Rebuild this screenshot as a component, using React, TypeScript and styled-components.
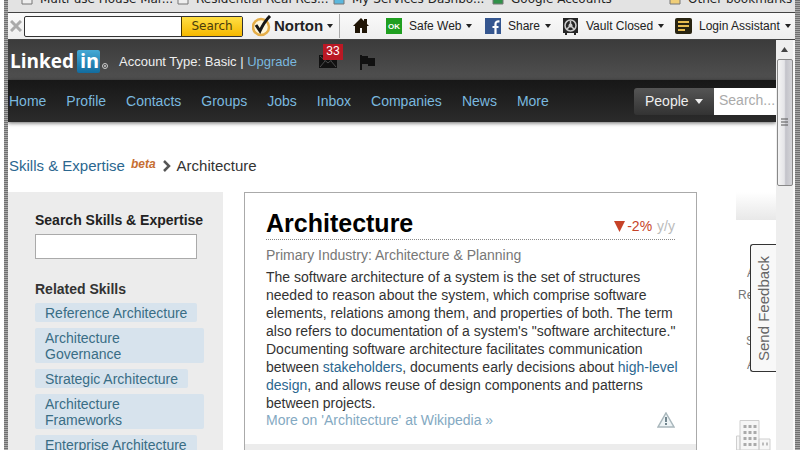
import React from "react";
import styled, { createGlobalStyle } from "styled-components";

const Global = createGlobalStyle`
  * { box-sizing: border-box; }
  html, body, #root { height: 100%; }
  body { margin: 0; overflow: hidden; background: #fff; color: #333; font: 14px/18px "Liberation Sans", Arial, sans-serif; }
  a { color: #2b678f; text-decoration: none; }
  button, input { font: inherit; }
  button { cursor: pointer; }
  svg { display: block; flex: none; }
`;

const Frame = styled.div`
  display: flex;
  flex-direction: column;
  height: 100vh;
  overflow: hidden;
  margin-left: 4px;
  padding: 0 5px 0 4px;
  background: repeating-linear-gradient(#707070 0 1px, #a8a8a8 1px 2px);
`;

const BookmarkBar = styled.nav`
  flex: none;
  display: flex;
  align-items: flex-end;
  height: 12px;
  padding: 0 0 1px 12px;
  overflow: hidden;
  background: #e3e3e3;
`;

const Bookmark = styled.a<{ $width: number; $last?: boolean }>`
  flex: none;
  display: flex;
  align-items: center;
  gap: 6px;
  width: ${(p) => p.$width}px;
  height: 24px;
  margin-left: ${(p) => (p.$last ? "auto" : "0")};
  font: 12px/16px "DejaVu Sans", Tahoma, sans-serif;
  white-space: nowrap;
  color: #222;
`;

const Toolbar = styled.div`
  flex: none;
  display: flex;
  align-items: center;
  height: 28px;
  border-top: 1px solid #444;
  border-bottom: 1px solid #444;
  background: linear-gradient(#fafafa, #eee);
  font-size: 12px;
  line-height: 16px;
`;

const CloseButton = styled.button`
  padding: 0;
  margin: 0 2px;
  border: 0;
  background: none;
`;

const ToolSearch = styled.form`
  display: flex;
  flex: none;
  width: 219px;
  height: 21px;
  margin-right: 9px;
  border: 1px solid #333;
  border-radius: 2px;
  background: #fff;
`;

const ToolInput = styled.input`
  flex: 1;
  min-width: 0;
  border: 0;
  background: transparent;
`;

const ToolSubmit = styled.button`
  width: 61px;
  padding: 0;
  border: 0;
  border-left: 1px solid #443600;
  background: linear-gradient(#ffdf45, #f5b800);
  color: #4a3c0c;
  font: 12px/16px "DejaVu Sans", Verdana, sans-serif;
`;

const Tool = styled.button<{ $width: number }>`
  flex: none;
  display: flex;
  align-items: center;
  gap: 7px;
  width: ${(p) => p.$width}px;
  padding: 0;
  border: 0;
  background: none;
  color: #222;
  white-space: nowrap;
`;

const NortonTool = styled(Tool)`
  gap: 2px;
  height: 24px;
  margin-right: 13px;
  border-right: 1px solid #aaa;
`;

const NortonName = styled.b`
  margin-right: 4px;
  font-size: 15px;
  color: #222;
`;

const Caret = styled.span`
  border: 3px solid transparent;
  border-top: 4px solid #222;
  border-bottom: 0;
  margin-left: -2px;
`;

const Viewport = styled.div`
  flex: 1;
  display: flex;
  min-height: 0;
`;

const Page = styled.div`
  position: relative;
  flex: 1;
  min-width: 0;
  overflow: hidden;
  background: #fff;
`;

const AccountBar = styled.header`
  display: flex;
  align-items: center;
  height: 40px;
  padding-top: 3px;
  background: linear-gradient(#3b3b3b, #505050);
  color: #eee;
  white-space: nowrap;
`;

const Logo = styled.a`
  width: 100px;
  margin: 0 10px 0 1px;
`;

const AccountText = styled.span`
  width: 200px;
  font-size: 13px;
`;

const SkyLink = styled.a`
  color: #7ab8df;
`;

const IconButton = styled.button`
  position: relative;
  padding: 0;
  margin-right: 22px;
  border: 0;
  background: none;
`;

const Badge = styled.span`
  position: absolute;
  left: 4px;
  top: -11px;
  width: 20px;
  height: 16px;
  background: #ba1824;
  color: #fff;
  font-size: 12px;
  line-height: 15px;
  text-align: center;
`;

const MainNav = styled.nav`
  display: flex;
  align-items: center;
  height: 42px;
  padding-left: 1px;
  background: linear-gradient(#171717, #2b2b2b);
  box-shadow: 0 1px 4px rgba(0, 0, 0, 0.6);
`;

const NavLinks = styled.div`
  display: flex;
  gap: 20px;
`;

const NavSearch = styled.form`
  flex: none;
  display: flex;
  height: 27px;
  margin-left: auto;
`;

const PeopleButton = styled.button`
  display: flex;
  align-items: center;
  justify-content: space-between;
  width: 80px;
  padding: 0 11px;
  border: 0;
  border-radius: 3px 0 0 3px;
  background: linear-gradient(#555, #333);
  color: #eee;
`;

const WhiteCaret = styled.span`
  border: 4px solid transparent;
  border-top: 5px solid #eee;
  border-bottom: 0;
`;

const NavInput = styled.input`
  width: 62px;
  padding: 0 0 3px 5px;
  border: 0;
  background: #fff;
  &::placeholder { color: #aaa; opacity: 1; }
`;

const Crumbs = styled.nav`
  display: flex;
  align-items: center;
  gap: 6px;
  height: 20px;
  margin: 34px 0 16px 1px;
  font-size: 15px;
`;

const Beta = styled.em`
  height: 20px;
  color: #c66e32;
  font-size: 12px;
  line-height: 16px;
  font-weight: bold;
`;

const Columns = styled.div`
  display: grid;
  grid-template-columns: 215px minmax(0, 453px) 1fr;
  column-gap: 21px;
`;

const Sidebar = styled.aside`
  padding: 19px 19px 0 27px;
  min-height: 300px;
  background: #ececec;
`;

const SideLabel = styled.label`
  display: block;
  margin-bottom: 5px;
  color: #222;
  font-weight: bold;
  white-space: nowrap;
`;

const SideInput = styled.input`
  display: block;
  width: 162px;
  height: 25px;
  margin-bottom: 21px;
  border: 1px solid #aaa;
  background: #fff;
`;

const SideTitle = styled.h2`
  margin: 0 0 5px;
  font-size: 14px;
  line-height: 18px;
`;

const SkillList = styled.ul`
  display: flex;
  flex-direction: column;
  align-items: flex-start;
  gap: 6px;
  margin: 0;
  padding: 0;
  list-style: none;
`;

const Skill = styled.li`
  padding: 2px 10px 1px;
  border-radius: 2px;
  background: #d7e3ed;
  line-height: 16px;
  a { color: #396d85; }
`;

const Card = styled.main`
  min-height: 300px;
  border: 1px solid #aaa;
`;

const CardBody = styled.div`
  padding: 13px 21px 16px;
`;

const CardHeader = styled.header`
  display: flex;
  align-items: center;
  justify-content: space-between;
  height: 34px;
  margin-bottom: 6px;
  border-bottom: 1px dotted #888;
`;

const CardTitle = styled.h1`
  margin: 0;
  color: #000;
  font-size: 25px;
  line-height: 32px;
`;

const Trend = styled.span`
  display: flex;
  align-items: center;
  gap: 2px;
  padding-top: 7px;
  color: #c64328;
  small { margin-left: 3px; color: #bbb; font-size: 14px; }
`;

const Industry = styled.p`
  margin: 0 0 4px;
  color: #777;
`;

const Text = styled.p`
  margin: 0;
  white-space: nowrap;
`;

const MoreRow = styled.div`
  display: flex;
  align-items: center;
  justify-content: space-between;
  line-height: 16px;
  a { color: #84a9c2; }
`;

const CardFooter = styled.div`
  height: 40px;
  background: #ececec;
`;

const Rail = styled.aside`
  padding-left: 18px;
  overflow: hidden;
  white-space: nowrap;
`;

const RailPanel = styled.div`
  height: 28px;
  margin-bottom: 44px;
  background: linear-gradient(#fff, #e8e8e8);
`;

const RailItem = styled.div<{ $indent: number; $gap: number }>`
  margin-bottom: ${(p) => p.$gap}px;
  padding-left: ${(p) => p.$indent}px;
  color: #777;
  font-size: 12px;
  line-height: 18px;
`;

const Feedback = styled.button`
  position: absolute;
  right: 0;
  top: 204px;
  width: 26px;
  height: 128px;
  padding: 0;
  border: 1px solid #333;
  border-right: 0;
  border-radius: 3px 0 0 3px;
  background: #f8f8f8;
  color: #666;
  font-size: 15px;
  writing-mode: vertical-rl;
  span { display: block; transform: rotate(180deg); }
`;

const ScrollTrack = styled.div`
  flex: none;
  display: flex;
  flex-direction: column;
  align-items: center;
  width: 19px;
  border-right: 2px solid #fafafa;
  background: #eee;
`;

const ScrollArrow = styled.button`
  display: flex;
  align-items: center;
  justify-content: center;
  width: 17px;
  height: 19px;
  padding: 0;
  border: 0;
  background: none;
`;

const ScrollThumb = styled.div`
  display: flex;
  align-items: center;
  justify-content: center;
  width: 16px;
  height: 127px;
  border: 1px solid #888;
  border-radius: 2px;
  background: linear-gradient(90deg, #f4f4f4, #e5e5e8 45%, #c3c3ca 55%, #d4d4d8);
`;

const bookmarks = [
  { label: "Multi-use House Mar...", color: "#eee", width: 156 },
  { label: "Residential Real Res...", color: "#eee", width: 156 },
  { label: "My Services Dashbo...", color: "#5bb7dd", width: 159 },
  { label: "Google Accounts", color: "#319149", width: 140 },
];

const navItems = ["Home", "Profile", "Contacts", "Groups", "Jobs", "Inbox", "Companies", "News", "More"];

const skills = [
  "Reference Architecture",
  "Architecture Governance",
  "Strategic Architecture",
  "Architecture Frameworks",
  "Enterprise Architecture",
];

const Document = ({ color }: { color: string }) => (
  <svg width="14" height="12" viewBox="0 0 14 12"><path d="M2 0h10v11H2z" fill={color} stroke="#777" /></svg>
);

const NortonIcon = () => (
  <svg width="20" height="22" viewBox="0 0 20 22">
    <circle cx="9" cy="12" r="8" fill="#fff7dc" stroke="#e5ae49" strokeWidth="2.5" />
    <path d="m4 10 4 6Q12 7 18 1" fill="none" stroke="#171717" strokeWidth="3" />
  </svg>
);

const HomeIcon = () => (
  <svg width="16" height="16" viewBox="0 0 16 16"><path d="M0 8 8 0l3 3V1h3v5l2 2h-2v7H9v-5H7v5H2V8z" fill="#201506" /></svg>
);

const SafeIcon = () => (
  <svg width="16" height="16" viewBox="0 0 16 16">
    <path d="M0 0h16v16H0z" fill="#1f9f20" />
    <text x="8" y="11" fill="#fff" fontSize="8" fontWeight="bold" textAnchor="middle" fontFamily="Liberation Sans">OK</text>
  </svg>
);

const FacebookIcon = () => (
  <svg width="16" height="16" viewBox="0 0 16 16">
    <path d="M0 0h16v16H0z" fill="#35568f" />
    <path d="M10.500 16V6q0-3 4-2.500M7.500 9h6" fill="none" stroke="#fff" strokeWidth="2.200" />
  </svg>
);

const VaultIcon = () => (
  <svg width="17" height="17" viewBox="0 0 17 17">
    <path d="M1 0h15v15h-2v2h-2v-2H5v2H3v-2H1z" fill="#252525" />
    <circle cx="8.5" cy="7.5" r="5.5" fill="none" stroke="#ccc" strokeWidth="1.5" />
    <path d="m8.500 7.500V3m0 4.500L5 11m3.500-3.500L12 11" stroke="#ccc" strokeWidth="1.500" />
    <circle cx="8.500" cy="7.500" r="2" fill="#ccc" />
  </svg>
);

const LoginIcon = () => (
  <svg width="17" height="16" viewBox="0 0 17 16">
    <rect width="17" height="16" rx="2" fill="#292411" />
    <path d="M3 4h11M3 8h11M3 12h7" stroke="#e7bd51" strokeWidth="2" />
  </svg>
);

const LinkedInLogo = () => (
  <svg width="100" height="24" viewBox="0 0 100 24" fontFamily="Open Sans" fontWeight="700">
    <defs>
      <linearGradient id="logoBlue" x2="0" y2="1"><stop stopColor="#45a9d5" /><stop offset="1" stopColor="#126c9f" /></linearGradient>
    </defs>
    <text x="1" y="18" fontSize="19" fill="#fff">Linked</text>
    <rect x="68" y="0" width="23" height="23" rx="2" fill="url(#logoBlue)" />
    <text x="71" y="18" fontSize="20" fill="#fff">in</text>
    <circle cx="96" cy="16" r="2.500" fill="none" stroke="#ccc" />
    <circle cx="96" cy="16" r="1" fill="#ccc" />
  </svg>
);

const MailIcon = () => (
  <svg width="18" height="13" viewBox="0 0 18 13">
    <path d="M0 0h18v13H0z" fill="#111" />
    <path d="m1 1 8 7 8-7M1 12l5-6m11 6-5-6" fill="none" stroke="#4b4b4b" />
  </svg>
);

const FlagIcon = () => (
  <svg width="17" height="16" viewBox="0 0 17 16"><path d="M1 1h2v1h6v2h7v8H9v-2H3v6H1z" fill="#111" /></svg>
);

const Building = () => (
  <svg width="36" height="30" viewBox="0 0 36 30">
    <path d="M4 .5h19V30H4zM.5 16H4v14H.5zM23 19h11v11H23z" fill="#f6f6f6" stroke="#cfcfcf" />
    <path d="M7.500 6.500h13M7.500 12.500h13M7.500 18.500h13M7.500 24.500h13" stroke="#aaa" strokeWidth="3" strokeDasharray="3 2" />
    <path d="M26 24h6" stroke="#bbb" strokeWidth="3" strokeDasharray="2 2" />
  </svg>
);

export default function App() {
  return (
    <>
      <Global />
      <Frame>
        <BookmarkBar>
          {bookmarks.map((b) => (
            <Bookmark href="#" key={b.label} $width={b.width}><Document color={b.color} />{b.label}</Bookmark>
          ))}
          <Bookmark href="#" $width={127} $last><Document color="#f0ce78" />Other bookmarks</Bookmark>
        </BookmarkBar>
        <Toolbar>
          <CloseButton aria-label="Close toolbar">
            <svg width="12" height="12" viewBox="0 0 12 12"><path d="m1 1 10 10M11 1 1 11" stroke="#aaa" strokeWidth="3" /></svg>
          </CloseButton>
          <ToolSearch onSubmit={(e) => e.preventDefault()}>
            <ToolInput aria-label="Toolbar search" />
            <ToolSubmit>Search</ToolSubmit>
          </ToolSearch>
          <NortonTool $width={88}><NortonIcon /><NortonName>Norton</NortonName><Caret /></NortonTool>
          <Tool $width={33} aria-label="Home"><HomeIcon /></Tool>
          <Tool $width={99}><SafeIcon />Safe Web <Caret /></Tool>
          <Tool $width={77}><FacebookIcon />Share <Caret /></Tool>
          <Tool $width={113}><VaultIcon />Vault Closed <Caret /></Tool>
          <Tool $width={114}><LoginIcon />Login Assistant <Caret /></Tool>
        </Toolbar>
        <Viewport>
          <Page>
            <AccountBar>
              <Logo href="#" aria-label="LinkedIn"><LinkedInLogo /></Logo>
              <AccountText>Account Type: Basic | <SkyLink href="#">Upgrade</SkyLink></AccountText>
              <IconButton aria-label="33 messages"><MailIcon /><Badge>33</Badge></IconButton>
              <IconButton aria-label="Notifications"><FlagIcon /></IconButton>
            </AccountBar>
            <MainNav>
              <NavLinks>{navItems.map((n) => <SkyLink href="#" key={n}>{n}</SkyLink>)}</NavLinks>
              <NavSearch onSubmit={(e) => e.preventDefault()}>
                <PeopleButton type="button">People<WhiteCaret /></PeopleButton>
                <NavInput aria-label="Search people" placeholder="Search..." />
              </NavSearch>
            </MainNav>
            <Crumbs>
              <a href="#">Skills &amp; Expertise</a><Beta>beta</Beta>
              <svg width="9" height="12" viewBox="0 0 9 12"><path d="m2 1 5 5-5 5" fill="none" stroke="#555" strokeWidth="2.500" /></svg>
              <span>Architecture</span>
            </Crumbs>
            <Columns>
              <Sidebar>
                <SideLabel htmlFor="skill-search">Search Skills &amp; Expertise</SideLabel>
                <SideInput id="skill-search" />
                <SideTitle>Related Skills</SideTitle>
                <SkillList>
                  {skills.map((skill) => <Skill key={skill}><a href="#">{skill}</a></Skill>)}
                </SkillList>
              </Sidebar>
              <Card>
                <CardBody>
                  <CardHeader>
                    <CardTitle>Architecture</CardTitle>
                    <Trend>
                      <svg width="11" height="11" viewBox="0 0 11 11"><path d="M0 0h11L5.500 11z" fill="#c64328" /></svg>
                      -2%<small>y/y</small>
                    </Trend>
                  </CardHeader>
                  <Industry>Primary Industry: Architecture &amp; Planning</Industry>
                  <Text>
                    The software architecture of a system is the set of structures<br />
                    needed to reason about the system, which comprise software<br />
                    elements, relations among them, and properties of both. The term<br />
                    also refers to documentation of a system's "software architecture."<br />
                    Documenting software architecture facilitates communication<br />
                    between <a href="#">stakeholders</a>, documents early decisions about <a href="#">high-level</a><br />
                    <a href="#">design</a>, and allows reuse of design components and patterns<br />
                    between projects.
                  </Text>
                  <MoreRow>
                    <a href="#">More on 'Architecture' at Wikipedia »</a>
                    <svg width="18" height="16" viewBox="0 0 18 16">
                      <path d="m9 1 8 14H1z" fill="#edf3f5" stroke="#a9b7bc" strokeWidth="1.500" />
                      <path d="M9 5v5m0 1v2" stroke="#71858e" strokeWidth="2" />
                    </svg>
                  </MoreRow>
                </CardBody>
                <CardFooter />
              </Card>
              <Rail>
                <RailPanel />
                <RailItem $indent={11} $gap={4}>A</RailItem>
                <RailItem $indent={2} $gap={28}>Re</RailItem>
                <RailItem $indent={10} $gap={6}>S</RailItem>
                <RailItem $indent={11} $gap={46}>A</RailItem>
                <Building />
              </Rail>
            </Columns>
            <Feedback><span>Send Feedback</span></Feedback>
          </Page>
          <ScrollTrack>
            <ScrollArrow aria-label="Scroll up"><svg width="7" height="5" viewBox="0 0 7 5"><path d="M0 5 3.500 0 7 5z" fill="#444" /></svg></ScrollArrow>
            <ScrollThumb><svg width="7" height="9" viewBox="0 0 7 9"><path d="M0 1h7M0 4h7M0 7h7" stroke="#555" /></svg></ScrollThumb>
          </ScrollTrack>
        </Viewport>
      </Frame>
    </>
  );
}
